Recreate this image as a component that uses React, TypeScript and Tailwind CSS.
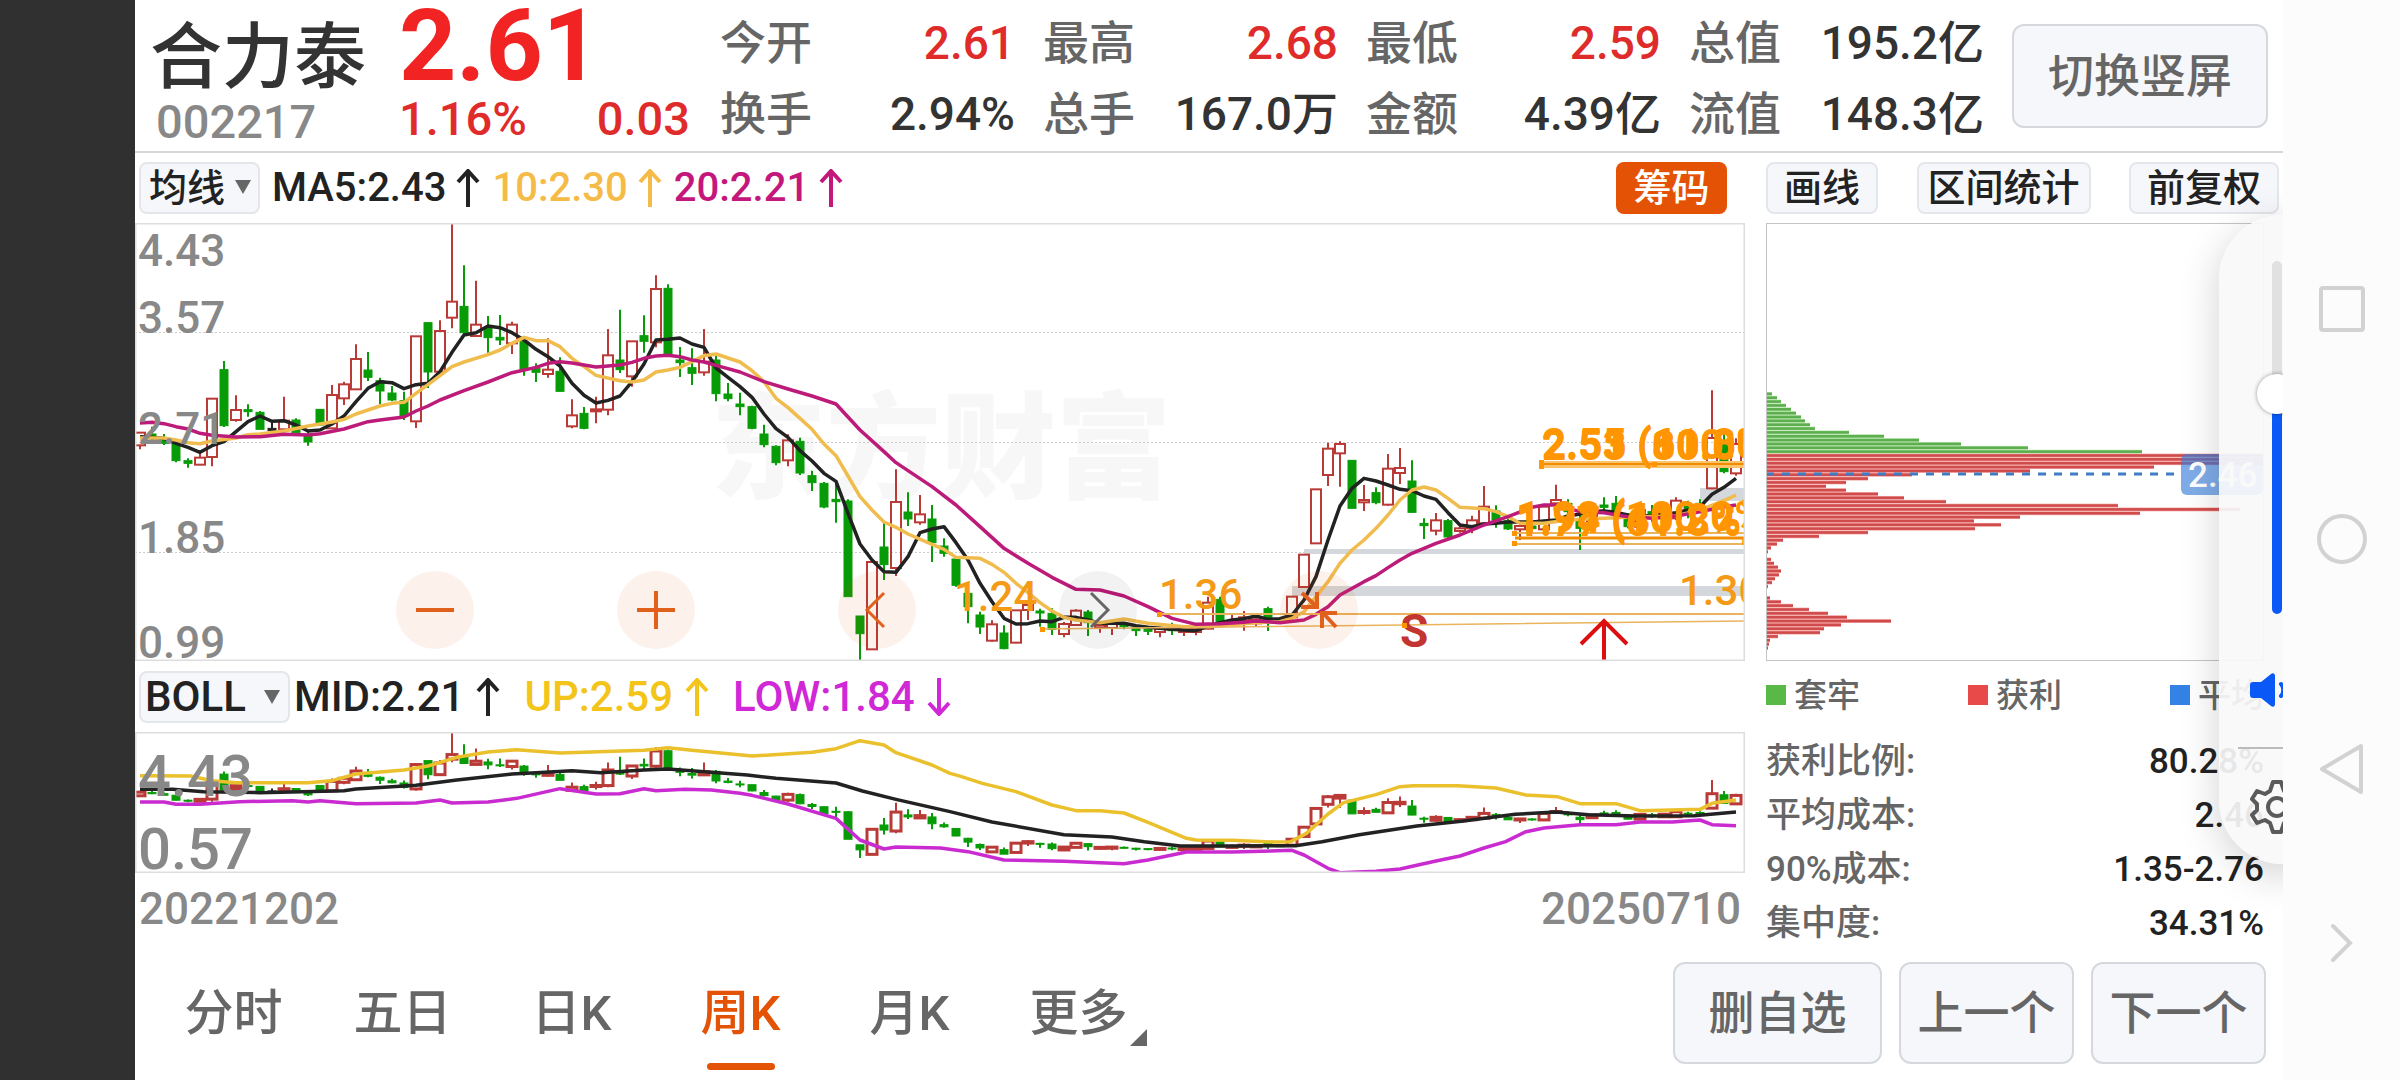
import { useState } from "react";

type Candle = [string, number, number, number, number];
type Point = [number, number];

// colour, high, body top, body bottom, low (thirds of a pixel, measured from the canvas top at 39)
const candles: Candle[] = [
  ["r", 668, 668, 706, 718], ["g", 650, 672, 684, 690], ["g", 672, 684, 700, 705], ["g", 695, 700, 752, 757],
  ["g", 745, 752, 760, 773], ["r", 728, 743, 764, 764], ["r", 566, 566, 741, 769], ["g", 453, 479, 647, 651],
  ["r", 556, 600, 630, 635], ["g", 583, 599, 605, 620], ["g", 603, 607, 658, 658], ["k", 630, 655, 662, 665],
  ["r", 560, 632, 658, 662], ["g", 625, 630, 668, 670], ["g", 665, 676, 696, 707], ["g", 597, 598, 645, 647],
  ["r", 525, 555, 655, 655], ["r", 515, 523, 565, 585], ["r", 403, 447, 538, 538], ["g", 426, 480, 502, 513],
  ["g", 503, 512, 543, 583], ["g", 528, 549, 570, 574], ["g", 545, 572, 618, 630], ["r", 379, 379, 634, 654],
  ["g", 336, 338, 486, 534], ["r", 331, 363, 485, 490], ["r", 39, 275, 323, 355], ["g", 166, 289, 368, 372],
  ["r", 212, 344, 378, 378], ["g", 318, 352, 383, 428], ["g", 315, 382, 390, 405], ["r", 335, 344, 400, 432],
  ["g", 385, 395, 478, 497], ["g", 460, 475, 487, 516], ["r", 385, 479, 492, 503], ["g", 442, 484, 544, 545],
  ["r", 568, 616, 649, 655], ["g", 591, 610, 655, 658], ["r", 560, 598, 604, 640], ["r", 357, 436, 599, 616],
  ["g", 299, 450, 479, 489], ["r", 394, 394, 499, 530], ["g", 316, 377, 394, 428], ["r", 196, 237, 397, 412],
  ["g", 223, 235, 432, 434], ["g", 411, 450, 458, 501], ["g", 415, 473, 490, 525], ["r", 357, 455, 487, 497],
  ["g", 437, 450, 551, 574], ["g", 519, 552, 566, 574], ["g", 548, 582, 590, 616], ["g", 587, 590, 655, 658],
  ["g", 644, 672, 704, 712], ["g", 706, 709, 758, 766], ["r", 673, 691, 751, 769], ["g", 683, 694, 789, 795],
  ["g", 782, 797, 818, 843], ["g", 816, 820, 891, 895], ["g", 820, 868, 875, 938], ["g", 868, 873, 1160, 1160],
  ["g", 1218, 1218, 1271, 1355], ["r", 1056, 1056, 1318, 1318], ["g", 938, 1011, 1064, 1110], ["r", 778, 876, 1074, 1098],
  ["g", 847, 906, 927, 948], ["r", 855, 913, 937, 944], ["g", 885, 927, 998, 1056], ["g", 985, 1008, 1030, 1040],
  ["g", 1045, 1047, 1126, 1130], ["g", 1145, 1150, 1190, 1240], ["g", 1205, 1215, 1251, 1272], ["r", 1231, 1243, 1292, 1295],
  ["g", 1246, 1269, 1316, 1318], ["r", 1201, 1201, 1298, 1300], ["r", 1170, 1185, 1200, 1230], ["g", 1196, 1203, 1209, 1250],
  ["g", 1195, 1210, 1258, 1275], ["r", 1236, 1242, 1272, 1282], ["r", 1198, 1202, 1245, 1245], ["g", 1200, 1206, 1238, 1278],
  ["r", 1240, 1245, 1252, 1268], ["r", 1238, 1242, 1254, 1275], ["g", 1236, 1244, 1250, 1258], ["g", 1250, 1254, 1262, 1278],
  ["g", 1252, 1258, 1264, 1275], ["r", 1250, 1256, 1266, 1282], ["g", 1238, 1252, 1262, 1275], ["r", 1255, 1258, 1266, 1278],
  ["r", 1252, 1256, 1266, 1276], ["r", 1160, 1178, 1256, 1258], ["g", 1160, 1168, 1240, 1240], ["r", 1215, 1235, 1245, 1245],
  ["r", 1203, 1222, 1232, 1262], ["r", 1215, 1228, 1240, 1250], ["g", 1190, 1196, 1235, 1263], ["g", 1222, 1228, 1238, 1242],
  ["r", 1160, 1160, 1222, 1225], ["r", 1034, 1034, 1131, 1131], ["r", 838, 838, 1000, 1000], ["r", 698, 716, 795, 828],
  ["r", 694, 702, 730, 830], ["g", 750, 751, 895, 896], ["r", 825, 870, 877, 903], ["g", 832, 848, 878, 883],
  ["r", 732, 776, 884, 887], ["r", 714, 774, 789, 822], ["g", 751, 813, 907, 908], ["g", 925, 940, 947, 987],
  ["r", 909, 931, 962, 976], ["g", 927, 932, 981, 985], ["r", 945, 955, 963, 968], ["r", 917, 931, 955, 970],
  ["r", 828, 890, 940, 945], ["g", 886, 903, 930, 953], ["g", 925, 932, 957, 960], ["r", 940, 948, 958, 990],
  ["g", 940, 948, 956, 965], ["r", 882, 890, 958, 960], ["r", 824, 870, 880, 895], ["g", 868, 880, 905, 920],
  ["g", 890, 930, 955, 1020], ["r", 895, 905, 935, 938], ["g", 862, 885, 892, 905], ["g", 858, 880, 905, 920],
  ["g", 910, 925, 950, 955], ["r", 885, 900, 950, 955], ["g", 885, 905, 920, 935], ["r", 890, 898, 925, 930],
  ["r", 862, 872, 925, 930], ["g", 872, 888, 895, 925], ["g", 868, 880, 888, 895], ["r", 541, 684, 835, 838],
  ["g", 655, 695, 785, 790], ["r", 685, 702, 790, 797],
];

const ma5: Point[] = [
  [0, 680], [2, 685], [3, 700], [4, 712], [5, 727], [6, 707], [7, 695], [8, 665], [9, 635], [10, 618], [11, 634], [12, 632],
  [13, 645], [14, 663], [15, 660], [16, 642], [17, 618], [18, 575], [19, 535], [20, 515], [21, 518], [22, 536], [23, 524],
  [24, 520], [25, 485], [26, 427], [27, 375], [28, 368], [29, 348], [30, 353], [31, 368], [32, 390], [33, 418], [34, 440],
  [35, 468], [36, 520], [37, 556], [38, 579], [39, 571], [40, 558], [41, 515], [42, 462], [43, 390], [44, 388], [45, 384],
  [46, 402], [47, 412], [48, 474], [49, 502], [50, 530], [51, 562], [52, 612], [53, 656], [54, 682], [55, 722], [56, 753],
  [57, 790], [58, 814], [59, 910], [60, 1002], [61, 1050], [62, 1085], [63, 1087], [64, 1040], [65, 968], [66, 957],
  [67, 950], [68, 998], [69, 1050], [70, 1120], [71, 1175], [72, 1225], [73, 1242], [74, 1241], [75, 1233], [76, 1235],
  [77, 1222], [78, 1222], [79, 1230], [80, 1240], [82, 1240], [83, 1247], [84, 1252], [86, 1258], [88, 1262], [89, 1248],
  [90, 1238], [91, 1230], [92, 1226], [93, 1218], [94, 1228], [95, 1226], [96, 1215], [97, 1170], [98, 1100], [99, 990],
  [100, 888], [101, 835], [102, 805], [103, 813], [104, 825], [105, 838], [106, 842], [107, 858], [108, 868], [109, 908],
  [110, 945], [111, 950], [112, 942], [113, 940], [114, 936], [116, 936], [118, 930], [119, 918], [120, 912], [121, 904],
  [122, 903], [123, 907], [124, 915], [126, 918], [128, 908], [129, 900], [130, 890], [131, 853], [132, 832], [133, 805],
];

const ma10: Point[] = [
  [0, 684], [2, 684], [3, 690], [4, 698], [5, 701], [6, 693], [8, 684], [9, 674], [10, 672], [12, 663], [14, 648],
  [16, 636], [17, 628], [18, 612], [20, 588], [21, 580], [22, 577], [23, 550], [24, 524], [25, 497], [26, 470], [27, 456],
  [29, 434], [30, 420], [31, 400], [32, 382], [33, 392], [34, 392], [35, 410], [36, 445], [37, 470], [38, 496], [40, 512],
  [41, 516], [42, 510], [43, 486], [44, 480], [45, 472], [46, 455], [47, 437], [48, 432], [50, 456], [51, 482], [52, 515],
  [53, 565], [54, 593], [55, 625], [56, 658], [57, 702], [58, 737], [59, 798], [60, 860], [61, 900], [62, 936], [63, 952],
  [64, 972], [66, 1003], [67, 1018], [68, 1042], [70, 1045], [71, 1063], [72, 1087], [73, 1120], [74, 1148], [75, 1178],
  [76, 1203], [77, 1222], [78, 1230], [80, 1238], [82, 1227], [84, 1240], [87, 1250], [89, 1250], [91, 1244], [93, 1238],
  [95, 1235], [96, 1225], [97, 1205], [98, 1160], [99, 1115], [100, 1060], [101, 1020], [102, 990], [103, 955], [104, 915],
  [105, 870], [106, 840], [107, 831], [108, 840], [109, 865], [110, 892], [112, 896], [113, 905], [114, 920], [115, 940],
  [117, 940], [119, 930], [122, 925], [125, 920], [128, 918], [130, 900], [132, 872], [133, 855],
];

const ma20: Point[] = [
  [0, 639], [1, 637], [2, 641], [3, 650], [4, 657], [5, 670], [6, 676], [8, 681], [10, 680], [12, 673], [14, 675],
  [15, 671], [17, 657], [19, 635], [20, 630], [22, 621], [23, 603], [24, 588], [25, 570], [27, 542], [29, 516], [31, 488],
  [33, 472], [34, 460], [35, 455], [36, 459], [38, 471], [40, 465], [41, 457], [42, 445], [43, 438], [44, 436], [45, 440],
  [46, 450], [47, 456], [48, 466], [50, 486], [52, 515], [54, 537], [56, 558], [58, 582], [60, 660], [62, 725], [63, 758],
  [64, 782], [66, 830], [68, 885], [70, 950], [72, 1015], [74, 1060], [76, 1102], [78, 1138], [80, 1140], [82, 1158],
  [84, 1190], [86, 1225], [88, 1243], [90, 1241], [92, 1237], [93, 1233], [95, 1238], [97, 1230], [98, 1213], [99, 1190],
  [100, 1155], [102, 1115], [103, 1097], [104, 1073], [105, 1050], [106, 1030], [108, 1000], [110, 975], [112, 945],
  [114, 920], [116, 892], [117, 885], [118, 885], [120, 905], [122, 908], [124, 920], [126, 925], [128, 918], [130, 905],
  [132, 890], [133, 885],
];

// the BOLL panel starts at 216 in the same units
const bollUp: Point[] = [
  [0, 347], [4.2, 348], [6, 362], [8, 368], [14, 368], [16, 362], [18, 342], [22, 330], [24, 318], [26.4, 292], [29, 276],
  [31.4, 269], [35, 279], [42, 271], [44, 263], [46, 271], [51, 288], [56, 277], [58, 266], [60, 242], [62, 255], [63, 278],
  [66, 315], [67.5, 340], [68.2, 347], [70.2, 370], [73, 395], [76, 435], [78, 452], [80, 452], [82, 459], [84, 487],
  [87.2, 535], [88, 540], [91, 541], [94.6, 546], [95.9, 545], [97.2, 520], [99, 462], [100.3, 428], [103, 404], [105, 380],
  [106.1, 377], [109.8, 377], [113, 384], [115.5, 405], [118.1, 410], [120, 431], [123, 431], [125, 452], [130, 448],
  [131, 430], [133, 420],
];

const bollMid: Point[] = [
  [0, 388], [2.7, 388], [5.3, 395], [10, 398], [17, 392], [18, 387], [23, 376], [26.4, 360], [31, 342], [33, 338],
  [36, 332], [38.4, 338], [42, 330], [44, 327], [47.6, 337], [50.6, 345], [53, 355], [58, 369], [60.2, 393], [63, 418],
  [67.5, 455], [71, 486], [77, 524], [81, 531], [83.7, 545], [86.7, 558], [91, 558], [96.3, 557], [98.5, 545],
  [101.6, 524], [106.4, 498], [110.3, 483], [114.6, 463], [118, 456], [120.7, 464], [124.7, 468], [129.5, 467], [133, 456],
];

const bollLow: Point[] = [
  [0, 426], [2, 426], [3, 433], [5, 433], [8.3, 425], [12.7, 422], [14, 426], [15, 422], [18, 431], [23, 429], [25, 420],
  [26, 429], [29, 426], [31.4, 415], [35, 386], [38, 402], [40, 401], [42, 386], [43, 392], [45.4, 388], [47.6, 390],
  [50, 400], [51, 406], [54, 432], [58, 475], [60, 540], [62, 567], [63, 561], [66.7, 564], [69, 575], [72, 600],
  [77, 604], [82, 611], [84, 600], [87.2, 576], [91, 576], [96, 571], [97, 585], [99, 625], [100, 638], [103, 634],
  [105, 627], [108, 603], [110, 588], [112, 564], [113.8, 545], [115.5, 515], [117, 504], [120, 494], [123, 494],
  [125, 486], [127.7, 486], [130, 480], [131, 494], [133, 497],
];

// bar lengths of the chip distribution, top to bottom
const lossChips = [5, 10, 14, 19, 24, 29, 34, 38, 43, 48, 82, 117, 152, 194, 261, 375];
const gainChips = [
  497, 497, 497, 387, 263, 145, 101, 79, 59, 79, 111, 137, 179, 351, 473, 373, 253, 207, 234, 208, 101, 52, 16, 10, 4, 1, 0,
  4, 7, 11, 14, 12, 8, 5, 1, 0, 0, 3, 14, 26, 42, 61, 80, 124, 74, 57, 53, 11, 3, 2, 1,
];

const colors: Record<string, string> = { r: "#b93a36", g: "#079c07", k: "#222222" };

const px = (i: number) => 5 + 12 * i;
const mainY = (v: number) => (v - 39) / 3;
const bollY = (v: number) => (v - 216) / 3;
const line = (pts: Point[], y: (v: number) => number) => pts.map(([i, v]) => `${px(i)},${y(v)}`).join(" ");

function Candles({ scale }: { scale: number }) {
  return (
    <g>
      {candles.map(([c, high, top, bottom, low], i) => {
        const x = px(i);
        const h = mainY(high) * scale;
        const t = mainY(top) * scale;
        const b = mainY(bottom) * scale;
        const l = mainY(low) * scale;
        const hollow = c === "r";
        return (
          <g key={i} stroke={colors[c]} strokeWidth="2">
            <line x1={x} y1={h} x2={x} y2={t} />
            <line x1={x} y1={b} x2={x} y2={l} />
            <rect
              x={hollow ? x - 5 : x - 4}
              y={t}
              width={hollow ? 10 : 8}
              height={Math.max(b - t, 1)}
              fill={hollow ? "none" : colors[c]}
              strokeWidth={hollow && scale < 1 ? 3 : hollow ? 2 : 1}
            />
          </g>
        );
      })}
    </g>
  );
}

function TrendArrow({ down = false }: { down?: boolean }) {
  return (
    <svg viewBox="0 0 24 38" className="w-[24px] h-[38px] shrink-0" fill="none" stroke="currentColor" strokeWidth="4">
      <path d={down ? "M12 0V35M2 25l10 11 10-11" : "M12 38V3M2 13L12 2l10 11"} />
    </svg>
  );
}

function KlineChart() {
  return (
    <svg viewBox="0 0 1610 438" className="block w-full h-auto" fontFamily="Roboto, 'Noto Sans CJK SC', sans-serif">
      <text x="576" y="266" fontSize="115" fontWeight="900" fill="#f7f7f7">东方财富</text>
      <g stroke="#cccccc" strokeDasharray="2 2">
        <line x1="0" y1="109.5" x2="1610" y2="109.5" />
        <line x1="0" y1="219.5" x2="1610" y2="219.5" />
        <line x1="0" y1="329.5" x2="1610" y2="329.5" />
      </g>
      <g fill="#d4d7db">
        <rect x="1169" y="326" width="440" height="5" />
        <rect x="1157" y="363" width="452" height="10" />
        <rect x="1565" y="265" width="45" height="13" />
      </g>

      <Candles scale={1} />
      <g fill="none" strokeWidth="3.5" strokeLinejoin="round">
        <polyline points={line(ma5, mainY)} stroke="#222222" />
        <polyline points={line(ma10, mainY)} stroke="#f0bc4e" />
        <polyline points={line(ma20, mainY)} stroke="#bd1b79" />
      </g>

      <g stroke="#e9b45c" strokeWidth="2">
        <line x1="1025" y1="391" x2="1610" y2="391" />
        <path d="M907 406L1269 402L1610 398" fill="none" strokeWidth="1.5" />
        <line x1="1380" y1="310" x2="1610" y2="310" />
        <line x1="1380" y1="315" x2="1610" y2="315" stroke="#f08c00" strokeWidth="3" />
        <line x1="1380" y1="321" x2="1610" y2="321" />
      </g>
      <rect x="1407" y="238" width="203" height="7" fill="#fbc46c" />
      <line x1="1407" y1="241" x2="1610" y2="241" stroke="#f08c00" strokeWidth="2" />
      <g fill="#ff9500">
        <rect x="905" y="404" width="5" height="5" />
        <rect x="1022" y="389" width="5" height="5" />
        <rect x="1404" y="237" width="5" height="9" />
        <rect x="1517" y="239" width="5" height="5" />
        <rect x="1377" y="308" width="5" height="5" />
        <rect x="1377" y="318" width="5" height="5" />
      </g>

      <g fontSize="44" fontWeight="500" fill="#888888">
        <text x="3" y="43">4.43</text>
        <text x="3" y="110">3.57</text>
        <text x="3" y="221">2.71</text>
        <text x="3" y="330">1.85</text>
        <text x="3" y="435">0.99</text>
      </g>
      <g fontSize="42" fontWeight="500" fill="#f59a16">
        <text x="819" y="388">1.24</text>
        <text x="1024" y="386">1.36</text>
        <text x="1544" y="382">1.30</text>
      </g>
      <g fontSize="42" fontWeight="700" fill="#ff9500">
        <text x="1407" y="237">2.53 (80.0%)</text>
        <text x="1407" y="235">2.55 (61.8%)</text>
        <text x="1407" y="236">2.51 (100.0%)</text>
        <text x="1381" y="308">1.98 (100.0%)</text>
        <text x="1381" y="310">1.94 (40.2%)</text>
        <text x="1381" y="313">1.77 (61.8%)</text>
      </g>
      <text x="1265" y="424" fontSize="46" fontWeight="700" fill="#c23531">S</text>
      <rect x="1267" y="400" width="5" height="5" fill="#ff9500" />
      <path d="M1469 438V398M1446 421l23-23 23 23" fill="none" stroke="#dc1010" strokeWidth="4" />
      <rect x="0.5" y="0.5" width="1609" height="437" fill="none" stroke="#dddddd" strokeWidth="2" />
    </svg>
  );
}

function BollChart() {
  return (
    <svg viewBox="0 0 1610 141" className="block w-full h-auto" fontFamily="Roboto, sans-serif">
      <Candles scale={0.287} />
      <g fill="none" strokeWidth="3.5" strokeLinejoin="round">
        <polyline points={line(bollUp, bollY)} stroke="#eac02c" />
        <polyline points={line(bollMid, bollY)} stroke="#222222" />
        <polyline points={line(bollLow, bollY)} stroke="#c92bd0" />
      </g>
      <g fontSize="58" fontWeight="500" fill="#888888">
        <text x="3" y="64">4.43</text>
        <text x="3" y="137">0.57</text>
      </g>
      <rect x="0.5" y="0.5" width="1609" height="140" fill="none" stroke="#dddddd" strokeWidth="2" />
    </svg>
  );
}

function ChipChart() {
  return (
    <svg viewBox="0 0 498 438" className="block w-full h-auto" fontFamily="Roboto, sans-serif">
      {[...lossChips, ...gainChips].map((w, i) => {
        const y = 169 + i * 3.85;
        const loss = i < lossChips.length;
        return (
          <g key={i}>
            <rect x="1" y={y} width={w} height="3.85" fill={loss ? "#b4e3a8" : "#f5a9a6"} />
            <rect x="1" y={y + 0.6} width={w} height="2.6" fill={loss ? "#5dae4e" : "#d04c4c"} />
          </g>
        );
      })}
      <line x1="0" y1="251" x2="408" y2="251" stroke="#3f7cc4" strokeWidth="3" strokeDasharray="8 8" />
      <rect x="415" y="231" width="82" height="41" rx="6" fill="#3a80dc" opacity="0.65" />
      <text x="422" y="264" fontSize="35" fontWeight="500" fill="#ffffff">2.46</text>
      <rect x="0.5" y="0.5" width="497" height="437" fill="none" stroke="#c4c4c4" strokeWidth="1" />
    </svg>
  );
}

const quotes = [
  { label: "今开", value: "2.61", up: true },
  { label: "最高", value: "2.68", up: true },
  { label: "最低", value: "2.59", up: true },
  { label: "总值", value: "195.2亿" },
  { label: "换手", value: "2.94%" },
  { label: "总手", value: "167.0万" },
  { label: "金额", value: "4.39亿" },
  { label: "流值", value: "148.3亿" },
];

const costs = [
  { label: "获利比例:", value: "80.28%" },
  { label: "平均成本:", value: "2.46" },
  { label: "90%成本:", value: "1.35-2.76" },
  { label: "集中度:", value: "34.31%" },
];

const tabs = ["分时", "五日", "日K", "周K", "月K", "更多"];

const toolButton = "h-[52px] rounded-lg border-2 border-[#e3e6ea] bg-[#f6f7fa] text-[38px] leading-none text-[#222222] whitespace-nowrap";
const bigButton = "h-[102px] rounded-xl border-2 border-[#d5d9de] bg-[#f6f7fa] text-[46px] leading-none text-[#666666] whitespace-nowrap";
const roundButton = "w-[78px] h-[78px] rounded-full bg-[#e35205]/8 text-[#e0601c] flex items-center justify-center";

function Header() {
  return (
    <header className="flex h-[153px] pl-[15px] pr-[15px] border-b-2 border-[#d8d8d8]">
      <div className="w-[249px] pt-[18px] shrink-0">
        <h1 className="text-[72px] leading-[80px] font-medium text-[#333333]">合力泰</h1>
        <p className="pl-1.5 text-[47px] leading-[48px] text-[#888888]">002217</p>
      </div>
      <div className="w-[291px] shrink-0 text-[#e02b2b]">
        <p className="text-[100px] leading-[92px] font-bold text-[#f12323]">2.61</p>
        <p className="flex justify-between text-[47px] leading-[54px]">
          <span>1.16%</span>
          <span>0.03</span>
        </p>
      </div>
      <dl className="flex-1 grid grid-cols-4 content-start gap-x-7 ml-[30px] mr-7 pt-2 text-[46px] leading-[71px] whitespace-nowrap">
        {quotes.map((q) => (
          <div key={q.label} className="flex justify-between">
            <dt className="text-[#666666]">{q.label}</dt>
            <dd className={q.up ? "text-[#e02b2b]" : "text-[#333333]"}>{q.value}</dd>
          </div>
        ))}
      </dl>
      <button className="w-[256px] h-[104px] mt-6 rounded-xl border-2 border-[#d5d9de] bg-[#f6f7fa] text-[46px] leading-none text-[#666666]">
        切换竖屏
      </button>
    </header>
  );
}

function VolumePanel() {
  const [volume, setVolume] = useState(64);

  return (
    <div className="absolute top-[215px] -right-[64px] w-[128px] h-[649px] rounded-[64px] bg-[#f9f9fa]/92 shadow-[0_10px_40px_rgba(0,0,0,0.18)] flex flex-col items-center">
      <input
        type="range"
        aria-label="音量"
        value={volume}
        onChange={(e) => setVolume(Number(e.target.value))}
        className="mt-[46px] mr-3 w-[40px] h-[353px] appearance-none bg-transparent [writing-mode:vertical-lr] [direction:rtl] [&::-webkit-slider-runnable-track]:w-[10px] [&::-webkit-slider-runnable-track]:h-full [&::-webkit-slider-runnable-track]:mx-auto [&::-webkit-slider-runnable-track]:rounded-full [&::-webkit-slider-runnable-track]:bg-[linear-gradient(to_bottom,#e1e1e1_38%,#0a59f7_38%)] [&::-webkit-slider-thumb]:appearance-none [&::-webkit-slider-thumb]:w-[40px] [&::-webkit-slider-thumb]:h-[40px] [&::-webkit-slider-thumb]:-ml-[15px] [&::-webkit-slider-thumb]:rounded-full [&::-webkit-slider-thumb]:bg-white [&::-webkit-slider-thumb]:shadow-[0_0_4px_rgba(0,0,0,0.4)]"
      />
      <svg viewBox="0 0 56 34" className="mt-[59px] mr-3 w-[56px] h-[34px]" fill="#0a59f7">
        <path d="M4 9h8L22 1c2-1.400 4-.5 4 2v28c0 2.500-2 3.400-4 2L12 25H4c-2 0-3-1-3-3V12c0-2 1-3 3-3z" />
        <path d="M32 11c3 3 3 9 0 12" fill="none" stroke="#0a59f7" strokeWidth="4" strokeLinecap="round" />
      </svg>
      <hr className="mt-10 w-[90px] border-t-2 border-[#bbbbbb]" />
      <svg viewBox="0 0 56 56" className="mt-[30px] mr-3 w-[56px] h-[56px]" fill="none" stroke="#5a5a5a" strokeWidth="4" strokeLinejoin="round">
        <path d="M24 3h8l3 9 5 3 8-3 5 8-4 5v6l4 5-5 8-8-3-5 3-3 9h-8l-3-9-5-3-8 3-5-8 5-5v-6l-5-5 5-8 8 3 5-3z" />
        <circle cx="28" cy="28" r="9" />
      </svg>
    </div>
  );
}

function SystemNav() {
  return (
    <nav className="w-[117px] shrink-0 pt-[194px] bg-[#fcfcfc] flex flex-col items-center text-[#d2d2d2]">
      <button aria-label="最近任务" className="h-[230px] flex items-center">
        <svg viewBox="0 0 52 52" className="w-[52px] h-[52px]" fill="none" stroke="currentColor" strokeWidth="4">
          <rect x="5" y="5" width="42" height="42" rx="2" />
        </svg>
      </button>
      <button aria-label="主页" className="h-[230px] flex items-center">
        <svg viewBox="0 0 52 52" className="w-[52px] h-[52px]" fill="none" stroke="currentColor" strokeWidth="4">
          <circle cx="26" cy="26" r="23" />
        </svg>
      </button>
      <button aria-label="返回" className="h-[230px] flex items-center">
        <svg viewBox="0 0 52 52" className="w-[52px] h-[52px]" fill="none" stroke="currentColor" strokeWidth="4" strokeLinejoin="round">
          <path d="M45 3v46L6 26z" />
        </svg>
      </button>
      <button aria-label="收起" className="h-[118px] flex items-center">
        <svg viewBox="0 0 52 52" className="w-[52px] h-[52px]" fill="none" stroke="currentColor" strokeWidth="4" strokeLinecap="round">
          <path d="M17 9l17 17-17 17" />
        </svg>
      </button>
    </nav>
  );
}

export default function App() {
  const [tab, setTab] = useState("周K");

  return (
    <div className="flex min-h-screen bg-white font-medium font-[Roboto,'Noto_Sans_CJK_SC',sans-serif]">
      <div className="w-[135px] shrink-0 bg-[#303030]"></div>

      <main className="relative flex-1 min-w-0 overflow-hidden">
        <Header />

        <div className="flex gap-[21px] pr-1">
          <section className="flex-1 min-w-0">
            <div className="h-[70px] flex items-center gap-3 pl-1 text-[40px] leading-none whitespace-nowrap">
              <div className="relative">
                <select aria-label="主图指标" className={`${toolButton} appearance-none w-[121px] pl-2 pr-6`}>
                  <option>均线</option>
                </select>
                <span className="pointer-events-none absolute right-[9px] top-[18px] border-x-8 border-t-[14px] border-x-transparent border-t-[#666666]"></span>
              </div>
              <p className="flex items-center gap-2.5 text-[#222222]">MA5:2.43<TrendArrow /></p>
              <p className="flex items-center gap-2.5 text-[#f5bb48]">10:2.30<TrendArrow /></p>
              <p className="flex items-center gap-2.5 text-[#c4177c]">20:2.21<TrendArrow /></p>
              <button className="ml-auto mr-[18px] w-[111px] h-[52px] rounded-lg bg-[#e35205] text-[38px] leading-none text-white">
                筹码
              </button>
            </div>

            <div className="relative">
              <KlineChart />
              <div className="absolute left-[261px] bottom-[12px] flex gap-[143px]">
                <button aria-label="缩小" className={roundButton}>
                  <svg viewBox="0 0 38 38" className="w-[38px] h-[38px]" stroke="currentColor" strokeWidth="4"><path d="M0 19h38" /></svg>
                </button>
                <button aria-label="放大" className={roundButton}>
                  <svg viewBox="0 0 38 38" className="w-[38px] h-[38px]" stroke="currentColor" strokeWidth="4"><path d="M0 19h38M19 0v38" /></svg>
                </button>
                <button aria-label="左移" className={roundButton}>
                  <svg viewBox="0 0 38 38" className="w-[38px] h-[38px]" fill="none" stroke="currentColor" strokeWidth="3"><path d="M26 2L9 19l17 17" /></svg>
                </button>
                <button aria-label="右移" className="w-[78px] h-[78px] rounded-full bg-black/5 text-[#666666] flex items-center justify-center">
                  <svg viewBox="0 0 38 38" className="w-[38px] h-[38px]" fill="none" stroke="currentColor" strokeWidth="3"><path d="M12 2l17 17-17 17" /></svg>
                </button>
                <button aria-label="收起全屏" className={roundButton}>
                  <svg viewBox="0 0 38 38" className="w-[38px] h-[38px]" fill="none" stroke="currentColor" strokeWidth="4"><path d="M2 2l14 13M17 1v15H1M36 36L23 22M22 37V22h15" /></svg>
                </button>
              </div>
            </div>

            <div className="h-[71px] flex items-center gap-6 pl-1 text-[42px] leading-none whitespace-nowrap">
              <div className="relative -mr-5">
                <select aria-label="副图指标" className="appearance-none w-[151px] h-[52px] pl-1 pr-8 rounded-lg border-2 border-[#e3e6ea] bg-[#f6f7fa] text-[42px] leading-none text-[#222222]">
                  <option>BOLL</option>
                </select>
                <span className="pointer-events-none absolute right-[10px] top-[19px] border-x-8 border-t-[14px] border-x-transparent border-t-[#666666]"></span>
              </div>
              <p className="flex items-center gap-3 text-[#222222]">MID:2.21<TrendArrow /></p>
              <p className="flex items-center gap-3 text-[#f3c41a]">UP:2.59<TrendArrow /></p>
              <p className="flex items-center gap-3 text-[#d028d6]">LOW:1.84<TrendArrow down /></p>
            </div>

            <BollChart />

            <div className="h-[72px] flex items-center justify-between px-1 text-[44px] leading-none text-[#888888]">
              <time>20221202</time>
              <time>20250710</time>
            </div>
          </section>

          <aside className="w-[513px] shrink-0">
            <div className="h-[70px] flex items-center justify-between">
              <button className={`${toolButton} w-[112px]`}>画线</button>
              <button className={`${toolButton} w-[174px]`}>区间统计</button>
              <button className={`${toolButton} w-[150px]`}>前复权</button>
            </div>
            <div className="mr-[15px]">
              <ChipChart />
              <ul className="h-[68px] mb-1.5 flex items-center justify-between text-[33px] leading-none text-[#666666]">
                <li className="flex items-center gap-2"><i className="size-5 bg-[#59b946]"></i>套牢</li>
                <li className="flex items-center gap-2"><i className="size-5 bg-[#e84a4a]"></i>获利</li>
                <li className="flex items-center gap-2"><i className="size-5 bg-[#3582e6]"></i>平均</li>
              </ul>
              <dl className="text-[35px] leading-[54px]">
                {costs.map((c) => (
                  <div key={c.label} className="flex justify-between">
                    <dt className="text-[#666666]">{c.label}</dt>
                    <dd className="text-[#222222]">{c.value}</dd>
                  </div>
                ))}
              </dl>
            </div>
          </aside>
        </div>

        <footer className="flex items-center h-[124px] pl-[14px] pr-[17px]">
          {tabs.map((t) => (
            <button
              key={t}
              onClick={() => setTab(t)}
              className={`relative w-[169px] h-full text-[49px] leading-none ${t === tab ? "text-[#e35205]" : "text-[#666666]"}`}
            >
              {t}
              {t === tab && <span className="absolute left-1/2 -translate-x-1/2 bottom-[5px] w-[68px] h-[7px] rounded-full bg-[#e35205]"></span>}
              {t === "更多" && <span className="absolute right-[16px] bottom-[29px] border-l-[17px] border-b-[17px] border-l-transparent border-b-[#666666]"></span>}
            </button>
          ))}
          <div className="ml-auto flex gap-[17px]">
            <button className={`${bigButton} w-[209px]`}>删自选</button>
            <button className={`${bigButton} w-[175px]`}>上一个</button>
            <button className={`${bigButton} w-[175px]`}>下一个</button>
          </div>
        </footer>

        <VolumePanel />
      </main>

      <SystemNav />
    </div>
  );
}
